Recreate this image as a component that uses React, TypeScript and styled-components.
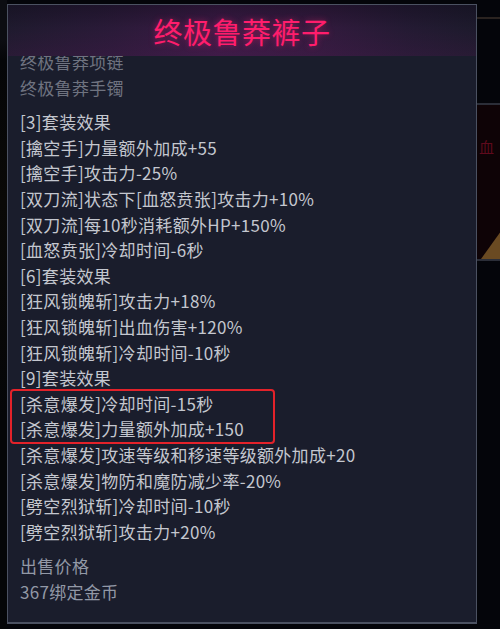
import React from 'react';
import styled, { createGlobalStyle } from 'styled-components';

// == data =========================================================================================
const setLines: { tier: string; effects: string[]; mark?: number[] }[] = [
  {
    tier: '[3]套装效果',
    effects: [
      '[擒空手]力量额外加成+55',
      '[擒空手]攻击力-25%',
      '[双刀流]状态下[血怒贲张]攻击力+10%',
      '[双刀流]每10秒消耗额外HP+150%',
      '[血怒贲张]冷却时间-6秒',
    ],
  },
  {
    tier: '[6]套装效果',
    effects: [
      '[狂风锁魄斩]攻击力+18%',
      '[狂风锁魄斩]出血伤害+120%',
      '[狂风锁魄斩]冷却时间-10秒',
    ],
  },
  {
    tier: '[9]套装效果',
    effects: [
      '[杀意爆发]冷却时间-15秒',
      '[杀意爆发]力量额外加成+150',
      '[杀意爆发]攻速等级和移速等级额外加成+20',
      '[杀意爆发]物防和魔防减少率-20%',
      '[劈空烈狱斩]冷却时间-10秒',
      '[劈空烈狱斩]攻击力+20%',
    ],
    mark: [ 0, 1 ],
  },
];

// == styles =======================================================================================
const Global = createGlobalStyle`
  html, body {
    margin: 0;
    padding: 0;
    background: #04050a;
  }
  body {
    font-family: "Noto Sans CJK SC", "Noto Sans", sans-serif;
  }
`;

const Root = styled.div`
  display: flex;
  width: 500px;
  height: 629px;
  overflow: hidden;
  background: #04050a;
`;

const LeftStrip = styled.div`
  width: 7px;
  flex: none;
  background: linear-gradient( 180deg, #0c0d12 0px, #0c0d12 40px, #050608 60px, #0a0907 200px, #050608 420px );
`;

const Panel = styled.div`
  margin-top: 4px;
  width: 470px;
  height: 620px;
  flex: none;
  box-sizing: border-box;
  border: 1px solid #4b5161;
  border-bottom-width: 2px;
  background: #1a1d2c;
  display: flex;
  flex-direction: column;
  overflow: hidden;
`;

const TitleBand = styled.div`
  position: relative;
  z-index: 1;
  height: 51px;
  flex: none;
  display: flex;
  align-items: center;
  justify-content: center;
  background:
    linear-gradient( 180deg, rgba( 10, 8, 20, 0.35 ) 0%, rgba( 0, 0, 0, 0 ) 45%, rgba( 90, 30, 90, 0.18 ) 100% ),
    linear-gradient( 90deg, #1f1a2e 0%, #2a1a38 22%, #3a1a44 45%, #331a3e 65%, #241a33 85%, #1d1a2c 100% );
`;

const Title = styled.h1`
  margin: 0;
  font-size: 29px;
  font-weight: 400;
  letter-spacing: 0.5px;
  color: #ff1d6c;
  text-shadow: 0 0 6px rgba( 255, 30, 110, 0.45 );
`;

const Body = styled.div`
  margin-top: -7px;
  padding-left: 12px;
  display: flex;
  flex-direction: column;
  gap: 9px;
  font-size: 17px;
  letter-spacing: 0.3px;
  line-height: 25.6px;
  white-space: nowrap;
`;

const Group = styled.div`
  display: flex;
  flex-direction: column;
`;

const Line = styled.div<{ $tone?: 'dim' | 'muted' | 'normal' }>`
  color: ${ ( p ) => p.$tone === 'dim' ? '#6f7380' : p.$tone === 'muted' ? '#9298a6' : '#c4c7cf' };
`;

const Mark = styled.div`
  box-sizing: border-box;
  width: 265px;
  margin: -2px 0 -2px -10px;
  padding-left: 8px;
  border: 2px solid #e3222a;
  border-radius: 4px;
`;

const RightStrip = styled.div`
  flex: 1;
  display: flex;
  flex-direction: column;
  padding-top: 17px;
`;

const Rule = styled.div`
  height: 2px;
  background: #2a2320;
`;

const Gap = styled.div<{ $h: number }>`
  height: ${ ( p ) => p.$h }px;
`;

const Plate = styled.div`
  height: 158px;
  border-top: 2px solid #2b2e38;
  border-bottom: 2px solid #2b2e38;
  background: #0e0306;
  display: flex;
  flex-direction: column;
  justify-content: space-between;
  padding: 34px 0 0 2px;
  box-sizing: border-box;
  overflow: hidden;
`;

const PlateText = styled.div`
  font-size: 15px;
  line-height: 16px;
  white-space: nowrap;
  color: #5e0a1c;
`;

// == component ====================================================================================
const App = (): JSX.Element => {
  return <Root>
    <Global />
    <LeftStrip />
    <Panel>
      <TitleBand>
        <Title>终极鲁莽裤子</Title>
      </TitleBand>
      <Body>
        <Group>
          <Line $tone="dim">终极鲁莽项链</Line>
          <Line $tone="dim">终极鲁莽手镯</Line>
        </Group>
        <Group>
          { setLines.map( ( set ) => {
            const marked = set.effects.filter( ( _, i ) => set.mark?.includes( i ) );
            const rest = set.effects.filter( ( _, i ) => !set.mark?.includes( i ) );
            return <React.Fragment key={ set.tier }>
              <Line>{ set.tier }</Line>
              { marked.length > 0 && <Mark>
                { marked.map( ( e ) => <Line key={ e }>{ e }</Line> ) }
              </Mark> }
              { rest.map( ( e ) => <Line key={ e }>{ e }</Line> ) }
            </React.Fragment>;
          } ) }
        </Group>
        <Group>
          <Line $tone="muted">出售价格</Line>
          <Line $tone="muted">367绑定金币</Line>
        </Group>
      </Body>
    </Panel>
    <RightStrip>
      <Rule />
      <Gap $h={ 84 } />
      <Plate>
        <PlateText>血</PlateText>
        <svg width="24" height="30" viewBox="0 0 24 30">
          <polygon points="2,30 22,2 24,2 24,30" fill="#6a4a22" />
        </svg>
      </Plate>
    </RightStrip>
  </Root>;
};

export default App;
